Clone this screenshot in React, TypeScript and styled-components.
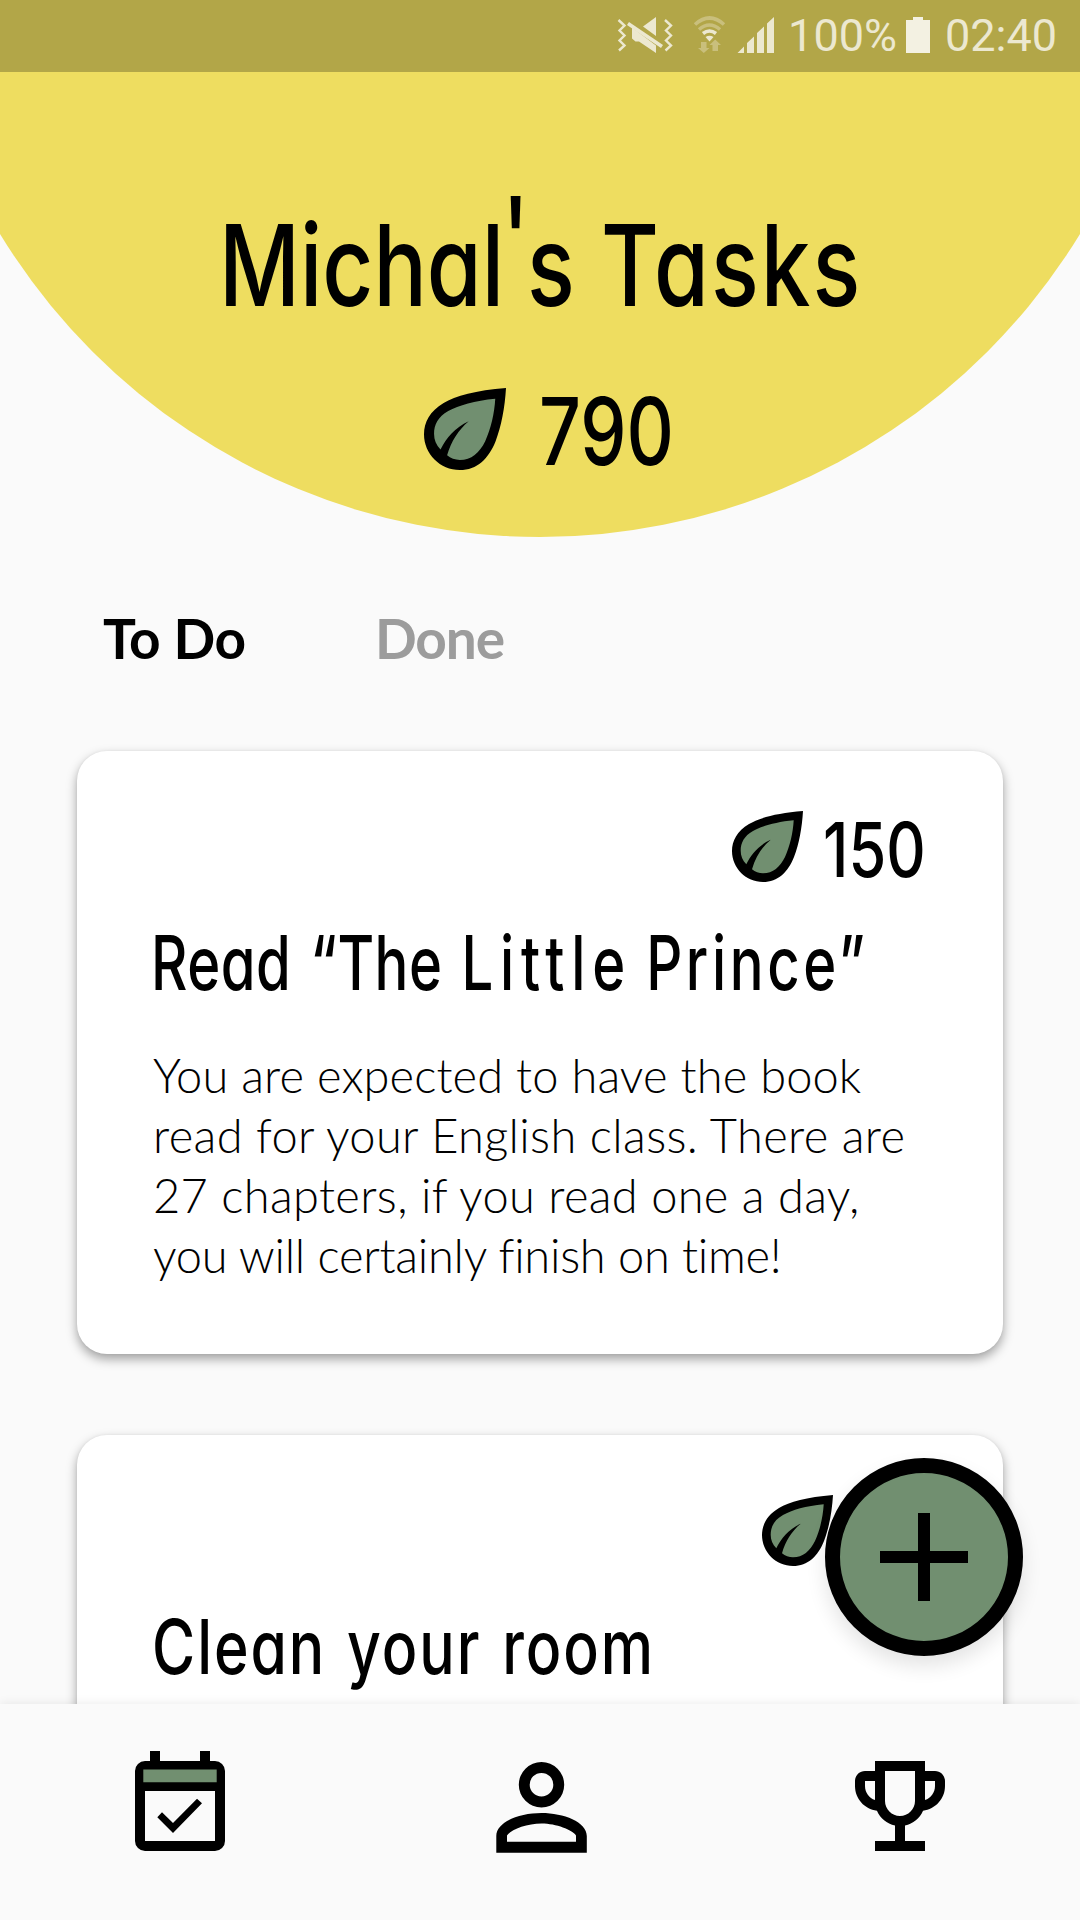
import React from "react";
import styled, { createGlobalStyle } from "styled-components";

const ink = "#000";
const green = "#718f70";
const paper = "#fafafa";

const GlobalStyle = createGlobalStyle`
  * { box-sizing: border-box; }
  body { margin: 0; background: ${paper}; }
  h1, h2, p { margin: 0; }
`;

const Screen = styled.main`
  position: relative;
  width: 1080px;
  height: 1920px;
  display: flex;
  flex-direction: column;
  overflow: hidden;
  background: ${paper};
  color: ${ink};
`;

const StatusBar = styled.div`
  flex: none;
  height: 72px;
  display: flex;
  align-items: center;
  justify-content: flex-end;
  padding-right: 23px;
  background: #b2a648;
  color: #ece8d0;
  font: 400 45px/72px Roboto, "Liberation Sans", sans-serif;
`;

const StatusIcons = styled.svg`
  width: 162px;
  height: 72px;
  margin-right: 12px;
`;

const StatusText = styled.span`
  height: 72px;
`;

const Battery = styled.svg`
  width: 24px;
  height: 72px;
  margin: 0 15px 0 9px;
`;

const Header = styled.header`
  flex: none;
  height: 465px;
  padding-top: 133px;
  background: #eedd60;
  clip-path: circle(632.7px at 50% -167.7px);
`;

const Hand = styled.span<{ $size: number; $squeeze: number; $spacing?: number }>`
  display: inline-block;
  white-space: nowrap;
  font-family: Inter, "Liberation Sans", sans-serif;
  font-weight: 500;
  font-size: ${(p) => p.$size}px;
  letter-spacing: ${(p) => p.$spacing ?? 0}px;
  font-feature-settings: "cv11";
  transform: scaleX(${(p) => p.$squeeze});
  transform-origin: left;
`;

const Title = styled.h1`
  width: 640px;
  height: 120px;
  margin-left: 219px;
  line-height: 120px;
  word-spacing: 3px;
`;

const Raised = styled.span`
  position: relative;
  top: -28px;
  margin: 0 -3px;
`;

const Score = styled.div`
  display: flex;
  align-items: flex-start;
  gap: 33px;
  margin: 63px 0 0 424px;
`;

const Amount = styled.div<{ $width: number; $line: number }>`
  width: ${(p) => p.$width}px;
  height: ${(p) => p.$line}px;
  line-height: ${(p) => p.$line + 5}px;
`;

const LeafSvg = styled.svg<{ $size: number }>`
  flex: none;
  width: ${(p) => p.$size}px;
  height: ${(p) => p.$size}px;
`;

const Tabs = styled.nav`
  flex: none;
  display: flex;
  padding: 71px 0 83px 103px;
`;

const Tab = styled.span<{ $active?: boolean; $width: number; $spacing: number }>`
  width: ${(p) => p.$width}px;
  height: 60px;
  color: ${(p) => (p.$active ? ink : "#9c9c9c")};
  font: 700 55px/60px Lato, "Liberation Sans", sans-serif;
  letter-spacing: ${(p) => p.$spacing}px;
`;

const List = styled.section`
  flex: 1;
  min-height: 0;
  display: flex;
  flex-direction: column;
  gap: 81px;
  padding: 0 77px;
`;

const Card = styled.article`
  flex: none;
  height: 603px;
  padding: 60px 75px 0 76px;
  border-radius: 30px;
  background: #fff;
  box-shadow: 0 5px 11px rgba(0, 0, 0, 0.36), 0 0 3px rgba(0, 0, 0, 0.05);
`;

const Reward = styled.div`
  display: flex;
  justify-content: flex-end;
  gap: 20px;
`;

const CardTitle = styled.h2<{ $indent?: number }>`
  height: 90px;
  margin: 36px 0 37px ${(p) => p.$indent ?? -2}px;
  line-height: 90px;
  word-spacing: 4px;
`;

const Word = styled.span<{ $spacing: number; $before?: number }>`
  margin: 0 ${(p) => -p.$spacing}px 0 ${(p) => p.$before ?? 0}px;
  letter-spacing: ${(p) => p.$spacing}px;
`;

const Body = styled.p`
  font: 300 47px/60px Lato, "Liberation Sans", sans-serif;
`;

const Line = styled.span<{ $spacing: number }>`
  display: block;
  white-space: nowrap;
  font-variant-ligatures: none;
  letter-spacing: ${(p) => p.$spacing}px;
`;

const Fab = styled.button`
  position: absolute;
  left: 825px;
  top: 1458px;
  width: 198px;
  height: 198px;
  display: grid;
  place-items: center;
  padding: 0;
  border: 15px solid ${ink};
  border-radius: 50%;
  background: ${green};
  box-shadow: 0 10px 20px rgba(0, 0, 0, 0.11);
`;

const BottomNav = styled.nav`
  position: relative;
  flex: none;
  height: 216px;
  display: grid;
  grid-template-columns: repeat(3, 1fr);
  justify-items: center;
  padding-top: 42px;
  background: ${paper};
  box-shadow: 0 0 10px rgba(0, 0, 0, 0.09);
`;

const NavIcon = styled.svg`
  width: 120px;
  height: 120px;
`;

function Leaf({ size }: { size: number }) {
  return (
    <LeafSvg $size={size} viewBox="0 0 71 71">
      <path
        fill={ink}
        d="M71 0C45 2 27 7 17 13C5 20 0 30 0 40C0 57 14 71 31 71C46 71 56 61 62 46C67 33 70 17 71 0Z"
      />
      <path
        fill={green}
        d="M61.7 9.3C44 11 30 15 21 20C12 25 8.7 32 8.7 39.7C8.7 45 10.500 49.500 14.3 53.3C19 43.500 27 34 38.7 28.7C30 36 23.500 46 20 58.3C23 61 27 62.3 31 62.3C41 62.3 48 56 53 46C58 35 61 22 61.7 9.3Z"
      />
    </LeafSvg>
  );
}

function Status() {
  return (
    <StatusBar>
      <StatusIcons viewBox="614 0 162 72">
        <g fill="none" stroke="currentColor" strokeWidth="2.4">
          <path d="M618.5 20l6 5.5-5 5 5 5-5 5 5 5-5.5 5" />
          <path d="M665 20l6 5.5-5 5 5 5-5 5 5 5-5.5 5" />
        </g>
        <path fill="currentColor" d="M656 17v19l-13-9.5zM632 27.5l24 18V53l-17-11.5h-3.5l-3.5-3z" />
        <path stroke="currentColor" strokeWidth="3.6" d="M628 23.5l34 23" />
        <g fill="none" strokeWidth="3.6">
          <path stroke="#c9bf7c" d="M695 24.5q14.500-13 29 0M699 29.500q10.500-9 21 0" />
          <path stroke="currentColor" d="M703 33.500q6.500-5 13 0" />
        </g>
        <path fill="currentColor" d="M705.500 37q4-2.500 8 0l-4 4.500z" />
        <path
          fill="#c9bf7c"
          d="M701 42h5.500v6h3l-5.700 5-5.800-5h3zM712.500 51v-6h-3l5.700-5.500 5.800 5.500h-3v6z"
        />
        <path
          fill="currentColor"
          d="M737.500 53l6.500-6.500V53zM747 43l7-6.500V53h-7zM757 33l7-6.500V53h-7zM767 23.500l7-6.500v36h-7z"
        />
      </StatusIcons>
      <StatusText>100%</StatusText>
      <Battery viewBox="0 0 24 72">
        <path fill="#f3f1e2" d="M7 17h10v3h7v33H0V20h7z" />
      </Battery>
      <StatusText>02:40</StatusText>
    </StatusBar>
  );
}

const littlePrince = [
  { text: "You are expected to have the book", spacing: 0.11 },
  { text: "read for your English class. There are", spacing: 0.36 },
  { text: "27 chapters, if you read one a day,", spacing: 0.33 },
  { text: "you will certainly finish on time!", spacing: -0.26 },
];

export default function App() {
  return (
    <Screen>
      <GlobalStyle />
      <Status />
      <Header>
        <Title>
          <Hand $size={113} $squeeze={0.785}>
            Michal<Raised>'</Raised>s <Word $spacing={2.7}>Tasks</Word>
          </Hand>
        </Title>
        <Score>
          <Leaf size={82} />
          <Amount $width={130} $line={82}>
            <Hand $size={93} $squeeze={0.79}>790</Hand>
          </Amount>
        </Score>
      </Header>
      <Tabs>
        <Tab $active $width={272} $spacing={-0.3}>To Do</Tab>
        <Tab $width={130} $spacing={-1.1}>Done</Tab>
      </Tabs>
      <List>
        <Card>
          <Reward>
            <Leaf size={71} />
            <Amount $width={105} $line={71}>
              <Hand $size={76} $squeeze={0.805}>150</Hand>
            </Amount>
          </Reward>
          <CardTitle>
            <Hand $size={75} $squeeze={0.75}>
              <Word $spacing={0.7}>Read</Word> <Word $spacing={0.6} $before={2}>“The</Word>{" "}
              <Word $spacing={9} $before={2}>Little</Word>{" "}
              <Word $spacing={4.8} $before={4}>Prince”</Word>
            </Hand>
          </CardTitle>
          <Body>
            {littlePrince.map((line) => (
              <Line key={line.text} $spacing={line.spacing}>{line.text}</Line>
            ))}
          </Body>
        </Card>
        <Card>
          <Reward>
            <Leaf size={71} />
            <Amount $width={75} $line={71}>
              <Hand $size={76} $squeeze={0.76}>50</Hand>
            </Amount>
          </Reward>
          <CardTitle $indent={-1}>
            <Hand $size={75} $squeeze={0.785} $spacing={2.5}>Clean your room</Hand>
          </CardTitle>
        </Card>
      </List>
      <BottomNav>
        <NavIcon viewBox="-15 -5 120 120">
          <path fill={ink} d="M15 0h10v10h40V0h10v10h5a10 10 0 0 1 10 10v70a10 10 0 0 1-10 10H10A10 10 0 0 1 0 90V20A10 10 0 0 1 10 10h5zM10 40v50h70V40z" />
          <path fill={green} d="M8.300 18.600h73.400v12.700H8.300z" />
          <path fill={ink} d="M22.300 66.300l4.700-5L38 72l24-24.300 5 4.600L38 82z" />
        </NavIcon>
        <NavIcon viewBox="-16.300 -16 120 120">
          <path
            fill={ink}
            fillRule="evenodd"
            d="M45.200 0a22.600 22.600 0 1 1 0 45.400a22.600 22.600 0 1 1 0-45.400zM45.200 10.900a11.800 11.800 0 1 0 0 23.600a11.800 11.800 0 1 0 0-23.600zM0 90.700V74C0 60 23 51 45.200 51S90.500 60 90.500 74v16.700zM10.700 79.700h69V73.500C76 68 60 61.600 45.200 61.600S14 68 10.700 73.500z"
          />
        </NavIcon>
        <NavIcon viewBox="0 0 24 24">
          <path
            fill={ink}
            d="M19 5h-2V3H7v2H5c-1.100 0-2 .9-2 2v1c0 2.550 1.920 4.630 4.390 4.940.63 1.500 1.980 2.630 3.610 2.960V19H7v2h10v-2h-4v-3.100c1.630-.33 2.980-1.460 3.610-2.960C19.080 12.630 21 10.550 21 8V7c0-1.100-.9-2-2-2zM5 8V7h2v3.820C5.840 10.400 5 9.300 5 8zm7 6c-1.650 0-3-1.350-3-3V5h6v6c0 1.650-1.350 3-3 3zm7-6c0 1.300-.84 2.400-2 2.820V7h2v1z"
          />
        </NavIcon>
      </BottomNav>
      <Fab aria-label="Add task">
        <svg width="88" height="88" viewBox="0 0 88 88">
          <path fill={ink} d="M38 0h12v38h38v12H50v38H38V50H0V38h38z" />
        </svg>
      </Fab>
    </Screen>
  );
}
